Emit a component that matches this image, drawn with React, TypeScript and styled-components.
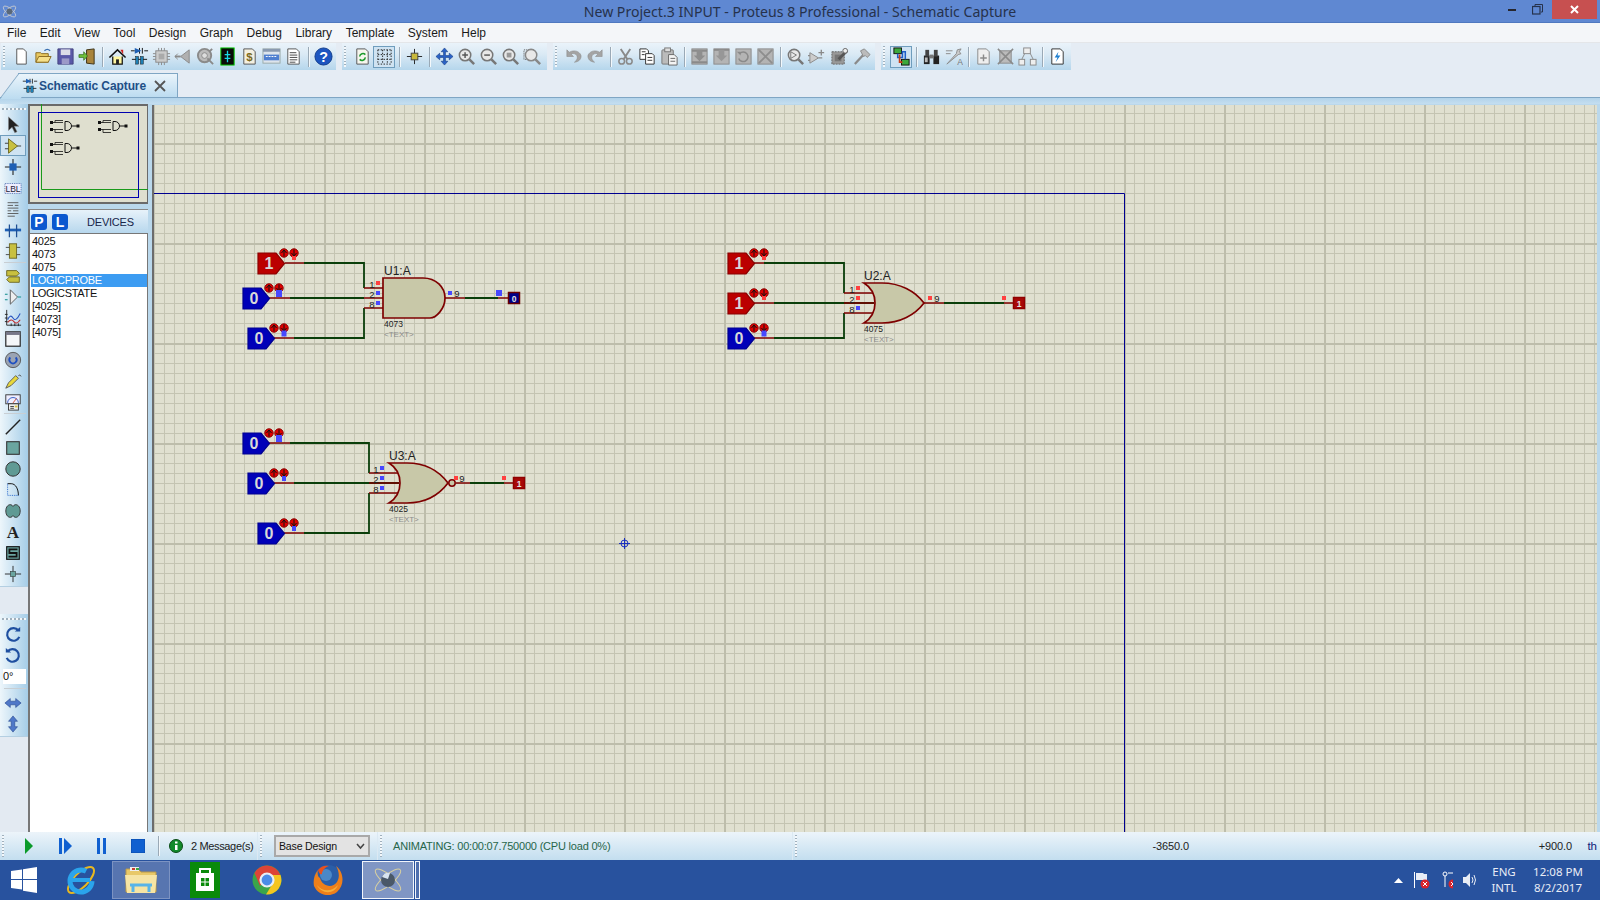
import React, { ReactNode } from 'react';
import styled, { createGlobalStyle } from 'styled-components';

const Global = createGlobalStyle`
  html, body { margin: 0; padding: 0; width: 1600px; height: 900px; overflow: hidden; background: #e3eaf2; }
  * { box-sizing: border-box; }
  body { font-family: "Liberation Sans", Arial, sans-serif; }
`;

const Page = styled.div`width:1600px;height:900px;display:flex;flex-direction:column;overflow:hidden;`;
const TitleBar = styled.div`height:23px;background:#5f88d2;border-bottom:1px solid #4f78c0;display:flex;align-items:flex-start;position:relative;`;
const AppIcon = styled.div`width:24px;height:22px;padding:3px 0 0 1px;`;
const TitleText = styled.div`position:absolute;left:0;right:0;top:1px;text-align:center;font:14.1px/21px "Noto Sans",sans-serif;color:#26324c;`;
const WinButtons = styled.div`margin-left:auto;display:flex;padding-right:3px;position:relative;`;
const WinBtn = styled.div<{ $w: number; $close?: boolean }>`width:${p => p.$w}px;height:19px;display:flex;align-items:center;justify-content:center;background:${p => (p.$close ? '#c75050' : 'transparent')};`;

const MenuBar = styled.div`height:20px;background:#f4f6f9;border-bottom:1px solid #e4e6e9;display:flex;align-items:center;gap:13.5px;padding:1px 0 0 7px;`;
const MenuItem = styled.span`font-size:12px;color:#1a1a1a;`;

const ToolArea = styled.div`height:54px;background:#e5ecf4;`;
const ToolRow = styled.div`height:30px;padding-left:1px;display:flex;gap:6px;align-items:flex-start;`;
const Group = styled.div<{ $end?: number }>`height:27px;display:flex;align-items:center;padding:0 ${p => p.$end ?? 2}px 0 9px;background:linear-gradient(#eaf3fa,#dbeaf5 40%,#b5d6ec);position:relative;`;
const Gripper = styled.i`position:absolute;left:2px;top:3px;bottom:3px;width:2px;background:repeating-linear-gradient(#9fb0bd 0 1px,#f4f8fb 1px 3px);`;
const VGripper = styled.i`display:block;height:2px;margin:4px 2px;background:repeating-linear-gradient(90deg,#9fb0bd 0 2px,#f4f8fb 2px 4px);`;
const ToolBtn = styled.div<{ $on?: boolean }>`width:22px;height:22px;display:flex;align-items:center;justify-content:center;${p => p.$on ? 'background:#cfe3f2;border:1px solid #6f9dbd;' : ''}`;
const Sep = styled.i`width:8px;height:20px;display:flex;justify-content:center;&::after{content:'';width:1px;background:#9aa9b6;box-shadow:1px 0 0 #f3f8fb;}`;
const TabRow = styled.div`height:24px;padding-left:18px;`;
const Tab = styled.div`width:160px;height:24px;position:relative;border:1px solid #7fa6c4;border-left:none;border-bottom:none;background:linear-gradient(#eaf4fb,#bcdcf0);display:flex;align-items:center;padding-left:4px;
  &::before{content:'';position:absolute;left:-9px;top:-1px;width:20px;height:25px;background:linear-gradient(#eaf4fb,#bcdcf0);border-left:1px solid #7fa6c4;border-top:1px solid #7fa6c4;transform:skewX(-37deg);}
`;
const TabIcon = styled.span`position:relative;display:flex;width:17px;`;
const TabLabel = styled.span`position:relative;font-size:12px;font-weight:bold;color:#1f4f86;margin-left:0;letter-spacing:-.1px;`;
const TabClose = styled.span`display:flex;margin-left:8px;`;

const Band = styled.div`height:7px;background:linear-gradient(#b2d3ea,#c4def0);border-top:1px solid #7fa6c4;`;
const Main = styled.div`height:728px;display:flex;background:#bad8ec;`;

const Strip = styled.div`width:28px;display:flex;flex-direction:column;background:#e3eaf2;`;
const StripGroup = styled.div<{ $mt?: number }>`margin-top:${p => p.$mt ?? 0}px;padding-bottom:2px;background:linear-gradient(90deg,#edf6fb,#a5cde8);border-bottom:1px solid #b4cfe2;`;
const SideBtn = styled.div<{ $on?: boolean }>`width:26px;height:21px;margin-left:0;display:flex;align-items:center;justify-content:center;${p => p.$on ? 'background:#cfe3f2;outline:1px solid #6f9dbd;outline-offset:-1px;' : ''}`;
const SideSep = styled.i<{ $mt?: number; $mb?: number }>`display:block;height:1px;margin:${p => p.$mt ?? 1}px 2px ${p => p.$mb ?? 2}px 4px;background:#c8ced3;`;
const AngleBox = styled.div`width:23px;height:15px;margin:3px 0 2px 3px;background:#fff;font-size:11px;line-height:14px;color:#111;`;

const Side = styled.div`width:122px;display:flex;flex-direction:column;`;
const Overview = styled.div`width:120px;height:100px;background:#dfdfcf;border:2px solid #6a6a6a;border-right-width:1px;position:relative;`;
const OverSvg = styled.svg`position:absolute;left:-2px;top:-2px;`;
const DevHead = styled.div`margin-top:5px;width:120px;height:24px;display:flex;align-items:center;padding-left:1px;gap:5px;background:linear-gradient(#e7f2fa,#b7d7ed);border:1px solid #8aa;border-width:1px 0 0 2px;border-left-color:#777;border-top-color:#888;`;
const PL = styled.div`width:16px;height:16px;border-radius:3px;background:#0b58cf;color:#fff;font-size:14px;font-weight:bold;line-height:16px;text-align:center;`;
const DevTitle = styled.div`font-size:11px;letter-spacing:-.2px;color:#18264a;margin-left:14px;`;
const DevList = styled.div`width:120px;flex:1;background:#fff;border:solid #777;border-width:1px 1px 0 2px;padding:1px 0 0 1px;`;
const DevRow = styled.div<{ $sel?: boolean }>`height:13px;font-size:11px;letter-spacing:-.3px;line-height:13px;padding-left:1px;color:${p => (p.$sel ? '#fff' : '#111')};background:${p => (p.$sel ? '#3c9cf2' : 'transparent')};`;

const CanvasFrame = styled.div`flex:1;margin:1px 3px 0 2px;border-left:2px solid #6c6c6c;position:relative;background-color:#e0e0d0;
  background-image:
    linear-gradient(90deg,#bdbdab 2px,transparent 2px),
    linear-gradient(#bdbdab 2px,transparent 2px),
    linear-gradient(90deg,#c4c4b2 1px,transparent 1px),
    linear-gradient(#c4c4b2 1px,transparent 1px);
  background-size:100px 100%,100% 100px,10px 100%,100% 10px;
  background-position:70px 0,0 38px,0 0,0 8px;
`;
const Sheet = styled.svg`position:absolute;left:0;top:0;`;

const StatusBar = styled.div`height:28px;display:flex;align-items:center;background:linear-gradient(#ecf4fa,#c3deef);font-size:11px;color:#111;`;
const StatusCell = styled.div<{ $w: number; $pl?: number; $last?: boolean }>`width:${p => p.$w}px;height:100%;flex:none;display:flex;align-items:center;padding-left:${p => p.$pl ?? 0}px;position:relative;border-right:${p => (p.$last ? 'none' : '1px solid #dbe9f3')};`;
const StatusBtn = styled.div<{ $w: number; $pl?: number }>`width:${p => p.$w}px;padding-left:${p => p.$pl ?? 0}px;display:flex;justify-content:center;`;
const Msg = styled.span`color:#1b1b1b;font-size:11px;letter-spacing:-.35px;`;
const SelectBox = styled.div`width:96px;height:22px;background:#e3e3e3;border:2px solid #a9a9a9;display:flex;align-items:center;justify-content:space-between;padding:0 3px 0 3px;font-size:10.6px;letter-spacing:-.2px;color:#111;`;
const Anim = styled.span`color:#27664a;font-size:11px;letter-spacing:-.2px;`;
const Coord = styled.span<{ $w: number }>`width:${p => p.$w}px;flex:none;text-align:right;color:#222;font-size:11px;letter-spacing:-.1px;`;
const Units = styled.span`margin-left:auto;margin-right:3px;color:#101a78;font-size:11.5px;`;

const Taskbar = styled.div`height:40px;background:#28529e;display:flex;align-items:stretch;gap:4px;color:#fff;`;
const TaskSlot = styled.div<{ $w: number; $state?: 'open' | 'active' }>`width:${p => p.$w}px;flex:none;margin:1px 0;display:flex;align-items:center;justify-content:center;
  ${p => p.$state === 'open' ? 'background:#5775b0;outline:1px solid #7c93c2;outline-offset:-1px;' : ''}
  ${p => p.$state === 'active' ? 'background:#8096c4;border:1px solid #f2f5fb;' : ''}`;
const Sliver = styled.div`width:5px;margin:1px 0 1px -3px;border:1px solid #f2f5fb;background:#4f6fae;`;
const Tray = styled.div`margin-left:auto;display:flex;align-items:center;padding-right:17px;`;
const TrayIcon = styled.div<{ $w: number }>`width:${p => p.$w}px;display:flex;justify-content:center;`;
const TrayText = styled.div<{ $w: number; $ml?: number }>`width:${p => p.$w}px;margin-left:${p => p.$ml ?? 0}px;text-align:center;white-space:nowrap;font:11.5px/16px "Noto Sans",sans-serif;color:#e8edf6;`;

const Glyph: React.FC<{ children: ReactNode; s?: number }> = ({ children, s = 20 }) => (
  <svg width={s} height={s} viewBox="0 0 20 20" style={{ display: 'block' }}>{children}</svg>
);
const G = '#a4a4a4';
const GD = '#8a8a8a';
const Mag = ({ c = '#777', inner }: { c?: string; inner?: ReactNode }) => (
  <><circle cx="8.5" cy="8.5" r="6" fill="#e8e8e8" stroke={c} strokeWidth="1.6" />{inner}<path d="M13 13l5 5" stroke={c} strokeWidth="2.6" /></>
);
const Block = ({ children }: { children: ReactNode }) => (
  <><rect x="2" y="2" width="16" height="16" fill="#b4b4b4" stroke={GD} />{children}</>
);

const tb: Record<string, ReactNode> = {
  new: <path d="M5 2h7l3 3v13H5z" fill="#fff" stroke="#555" />,
  open: <><path d="M2 16V6h5l1 1h7v9z" fill="#e8c860" stroke="#8a6a20" /><path d="M2 16l3-6h13l-3 6z" fill="#f6e08a" stroke="#8a6a20" /><path d="M11 4q3-3 6 0" fill="none" stroke="#3a6fb0" strokeWidth="1.4" /></>,
  save: <><path d="M2 2h16v16H2z" fill="#5a58a8" stroke="#45437f" /><rect x="5" y="2.5" width="10" height="6" fill="#dcdce8" /><rect x="6" y="12" width="8" height="6" fill="#9c9ac8" /></>,
  imp: <><path d="M9 3l8-1v16l-8-1z" fill="#a8843c" stroke="#3c3014" /><path d="M1 8h5V5l4 4.5L6 14v-3H1z" fill="#6fc03c" stroke="#2d6a15" strokeWidth=".7" /></>,
  home: <><path d="M5 10v8h10v-8" fill="#fff6a0" stroke="#111" strokeWidth="1.3" /><path d="M1.5 11L10 3l8.500 8" fill="none" stroke="#111" strokeWidth="1.6" /><path d="M13 3h3v5z" fill="#d02020" /><rect x="8.500" y="13" width="3" height="5" fill="#222" /></>,
  comp: <><path d="M10 1v6M1 4h4M15 4h4" stroke="#111" /><path d="M5 1v6l7-3z" fill="#1e5fb4" /><path d="M13 1v6" stroke="#111" /><path d="M2 13h16" stroke="#111" /><rect x="6" y="10" width="3" height="8" fill="#1e7fb4" stroke="#111" strokeWidth=".5" /><rect x="11" y="10" width="3" height="8" fill="#1e7fb4" stroke="#111" strokeWidth=".5" /></>,
  chip: <><rect x="4" y="4" width="12" height="12" fill="#ccc" stroke={GD} /><rect x="7" y="7" width="6" height="6" fill="#aaa" /><path d="M1 7h3M1 10h3M1 13h3M16 7h3M16 10h3M16 13h3M7 1v3M10 1v3M13 1v3M7 16v3M10 16v3M13 16v3" stroke={GD} /></>,
  gate: <><path d="M16 3v14L7 10z" fill="#b0b0b0" stroke={GD} /><path d="M1 10h6" stroke={GD} strokeWidth="2" /><path d="M4 7L1 10l3 3" fill="none" stroke={GD} /></>,
  wheel: <><circle cx="9" cy="9" r="7" fill="#bbb" stroke={GD} strokeWidth="2" /><circle cx="9" cy="9" r="3" fill="#ddd" stroke={GD} /><path d="M12 12l6 6M17 2l-3 3" stroke={GD} strokeWidth="2" /></>,
  board: <><rect x="3" y="1" width="14" height="18" fill="#0a0a0a" stroke="#0c0" /><path d="M10 4v12M7 8h6M7 12h6" stroke="#18d8e8" strokeWidth="1.4" /></>,
  bom: <><path d="M4 2h9l3 3v13H4z" fill="#f4f0e0" stroke="#555" /><text x="10" y="15" fontSize="12" fontWeight="bold" textAnchor="middle" fill="#7a6a20" fontFamily="Liberation Sans">$</text></>,
  disp: <><rect x="1" y="2" width="18" height="15" fill="#dde4ec" stroke="#9aa" /><rect x="1" y="2" width="18" height="3" fill="#8a9ab0" /><rect x="2" y="8" width="16" height="6" fill="#4f7fd0" /><path d="M4 10h12" stroke="#fff" strokeDasharray="2 1" /></>,
  doc: <><path d="M4 2h9l3 3v13H4z" fill="#fff" stroke="#555" /><path d="M6 6h7M6 8.500h8M6 11h8M6 13.500h8M6 16h6" stroke="#444" /></>,
  help: <><circle cx="10" cy="10" r="9" fill="#1c55c0" stroke="#0e3a8a" /><text x="10" y="15.500" fontSize="15" fontWeight="bold" textAnchor="middle" fill="#fff" fontFamily="Liberation Sans">?</text></>,
  refresh: <><path d="M4 2h9l3 3v13H4z" fill="#f6f6ee" stroke="#555" /><path d="M7 10a3.500 3.500 0 0 1 6-2M13 11a3.500 3.500 0 0 1-6 2" fill="none" stroke="#1c9a2c" strokeWidth="1.6" /></>,
  grid: <path d="M3 3h14M3 8h14M3 13h14M3 18h14M3 3v15M8 3v15M13 3v15M17 3v15" stroke="#222" strokeDasharray="1.500 1.500" fill="none" />,
  origin: <><path d="M10 2v16M2 10h16" stroke="#222" /><rect x="6.500" y="6.500" width="7" height="7" fill="#c8b83c" stroke="#444" /></>,
  pan: <path d="M10 1l3.500 4H11v4h4V6.500l4 3.500-4 3.500V11h-4v4h2.500L10 19l-3.500-4H9v-4H5v2.500L1 10l4-3.500V9h4V5H6.500z" fill="#2a62c8" stroke="#143a80" strokeWidth=".6" />,
  zin: <Mag inner={<path d="M5.500 8.500h6M8.500 5.500v6" stroke="#555" strokeWidth="1.5" />} />,
  zout: <Mag inner={<path d="M5.500 8.500h6" stroke="#555" strokeWidth="1.5" />} />,
  zall: <Mag inner={<rect x="6" y="6" width="5" height="5" fill="#999" />} />,
  zarea: <><path d="M1 3h10v10H1z" fill="none" stroke="#555" strokeDasharray="1 1" /><Mag c="#888" /></>,
  undo: <path d="M3 3v7h7L7.500 7.500C10 6 14 7.500 14 11c0 2-1 3.500-3 5 4.500-.5 7-3 7-6.500C18 7 13 1.500 5.500 5.500z" fill={G} stroke={GD} strokeWidth=".6" />,
  redo: <path d="M17 3v7h-7l2.500-2.500C10 6 6 7.500 6 11c0 2 1 3.500 3 5-4.500-.5-7-3-7-6.500C2 7 7 1.500 14.500 5.500z" fill={G} stroke={GD} strokeWidth=".6" />,
  cut: <><path d="M5 2l7 11M15 2L8 13" stroke={GD} strokeWidth="2" /><circle cx="6" cy="15" r="3" fill="none" stroke={GD} strokeWidth="1.6" /><circle cx="14" cy="15" r="3" fill="none" stroke={GD} strokeWidth="1.6" /></>,
  copy: <><path d="M2 2h7l2 2v9H2z" fill="#fff" stroke="#333" /><path d="M8 7h7l2 2v9H8z" fill="#fff" stroke="#333" /><path d="M4 5h4M4 8h3M10 11h5M10 14h5" stroke="#333" /></>,
  paste: <><rect x="2" y="3" width="12" height="15" rx="1" fill="#bbb" stroke="#777" /><rect x="5" y="1" width="6" height="4" fill="#ddd" stroke="#777" /><path d="M9 8h6l3 3v8H9z" fill="#f4f4f4" stroke="#666" /><path d="M11 12h5M11 15h5" stroke="#666" /></>,
  bcopy: <Block><path d="M2 4h16M2 16h16" stroke={GD} strokeWidth="2" /><path d="M7 3h6v6h3l-6 6-6-6h3z" fill="#8e8e8e" /></Block>,
  bmove: <Block><path d="M2 3h16" stroke={GD} strokeWidth="2" /><path d="M7 3h6v6h3l-6 6-6-6h3z" fill="#979797" /></Block>,
  brot: <Block><path d="M6 7a5 5 0 1 1-1 5" fill="none" stroke={GD} strokeWidth="1.6" /><path d="M3 5l4 0v4z" fill={GD} /></Block>,
  bdel: <Block><path d="M3 3l14 14M17 3L3 17" stroke="#8e8e8e" strokeWidth="2" /></Block>,
  pick: <Mag inner={<path d="M5 5l6 3.500L5 12z" fill="none" stroke="#777" />} />,
  make: <><path d="M2 6v11l9-5.500z" fill="#ccc" stroke={GD} /><path d="M11 11.500h4M14 3v6M11 6h6M0 9h2M0 14h2" stroke={GD} strokeWidth="1.4" /></>,
  pkg: <><rect x="2" y="5" width="13" height="13" fill="#999" stroke="#666" strokeDasharray="2 1" /><rect x="5" y="8" width="7" height="7" fill="#777" /><path d="M9 13l9-9" stroke="#555" strokeWidth="3" /><circle cx="16" cy="4" r="2.500" fill="#eee" stroke="#666" /></>,
  ham: <><path d="M3 18L13 7" stroke={GD} strokeWidth="2.400" /><path d="M9 4l4-2 6 6-3 3-2-2-2 1z" fill="#bbb" stroke={GD} /></>,
  route: <><rect x="2" y="1" width="8" height="6" fill="#3ca83c" stroke="#111" /><rect x="10" y="13" width="8" height="6" fill="#3ca83c" stroke="#111" /><path d="M6 7v4h5V5h3v8" fill="none" stroke="#1e5fc8" strokeWidth="1.6" /><path d="M8 8v8h3" fill="none" stroke="#c83c14" strokeWidth="1.8" /></>,
  bino: <><rect x="2" y="9" width="6" height="9" fill="#222" /><rect x="12" y="9" width="6" height="9" fill="#222" /><rect x="3.500" y="3" width="4" height="7" fill="#444" /><rect x="12.500" y="3" width="4" height="7" fill="#444" /><rect x="8" y="8" width="4" height="4" fill="#777" /><rect x="3" y="11" width="3" height="5" fill="#bbb" /></>,
  assign: <><path d="M2 4h7M2 7h5" stroke={GD} /><path d="M3 18L13 7l1-4 4-1-2 3 2 2-3 1z" fill="#ccc" stroke={GD} /><text x="14" y="19" fontSize="9" fill="#777" fontFamily="Liberation Sans">A</text></>,
  sheet: <><path d="M4 2h9l3 3v13H4z" fill="#eee" stroke={GD} /><path d="M10 8v7M6.500 11.500h7" stroke={GD} strokeWidth="1.5" /></>,
  rmsheet: <><rect x="4" y="4" width="12" height="13" fill="#bbb" stroke={GD} /><path d="M2 2l16 16M18 2L2 18" stroke={GD} strokeWidth="1.6" /></>,
  goto: <><rect x="6" y="1" width="7" height="6" fill="#eee" stroke={GD} /><rect x="1" y="13" width="6" height="6" fill="#eee" stroke={GD} /><rect x="13" y="13" width="6" height="6" fill="#eee" stroke={GD} /><path d="M7 7l-3 6M13 7l3 6" stroke={GD} /></>,
  net: <><path d="M4 2h9l3 3v13H4z" fill="#fff" stroke="#333" /><path d="M11 5L7 11h3l-2 5 5-7h-3z" fill="#1e7fd0" /></>,
};
const Teal = '#6aa5a0';
const sd: Record<string, ReactNode> = {
  select: <path d="M5 1v15l4-3.500 3 6 2.500-1-3-6h5z" fill="#222" stroke="#888" strokeWidth=".6" />,
  comp: <><path d="M1 7h5M1 13h5M14 10h5" stroke="#444" strokeWidth="1.2" /><path d="M5 2v16l10-8z" fill="#c8c040" stroke="#6a6420" /></>,
  junc: <><path d="M10 1v18M1 10h18" stroke="#222" strokeWidth="1.2" /><rect x="6" y="6" width="8" height="8" fill="#1e5fb4" /></>,
  lbl: <><rect x="1" y="5" width="18" height="11" fill="#eef" stroke="#46a" strokeDasharray="1 1" /><text x="10" y="14" fontSize="9.500" textAnchor="middle" fill="#223" fontFamily="Liberation Sans">LBL</text></>,
  script: <path d="M4 3h12M4 6h6M12 6h4M4 9h12M4 12h4M10 12h6M4 15h12M4 18h8" stroke="#555" />,
  bus: <><path d="M1 10h18" stroke="#1e5fb4" strokeWidth="3" /><path d="M6 4v14M14 4v14" stroke="#1e4f94" strokeWidth="1.4" /></>,
  sub: <><rect x="6" y="2" width="8" height="16" fill="#c8c040" stroke="#6a6420" /><path d="M2 6h4M2 14h4M14 6h4M14 14h4" stroke="#444" /></>,
  term: <><path d="M3 4h11l3 3-3 3H3z" fill="#c8c040" stroke="#6a6420" /><path d="M17 11H6l-3 3 3 3h11z" fill="#c8c040" stroke="#6a6420" /></>,
  pin: <><path d="M7 2v16l8-8z" fill="#eee" stroke="#555" /><path d="M1 7h3" stroke="#2a9a9a" strokeWidth="1.3" /><path d="M1 13h3" stroke="#2a9a9a" strokeWidth="1.3" /><path d="M15 10h4" stroke="#2a9a9a" strokeWidth="1.3" /></>,
  graph: <><path d="M3 1v17h16" fill="none" stroke="#222" /><path d="M4 12q3-7 6-2t8-5" fill="none" stroke="#2a55c0" strokeWidth="1.2" /><path d="M4 15q4-5 7-1t7-2" fill="none" stroke="#c02a2a" strokeWidth="1.2" /><path d="M1 6h3M1 10h3M1 14h3M8 16v3M12 16v3M16 16v3" stroke="#222" /></>,
  tape: <><rect x="2" y="2" width="16" height="16" fill="#f4f6f8" stroke="#222" strokeWidth="1.3" /><rect x="2" y="2" width="16" height="3.500" fill="#778" /></>,
  gen: <><circle cx="10" cy="10" r="8.500" fill="#9aa4b4" stroke="#555" /><path d="M7 7a4 4 0 1 0 6 0" fill="none" stroke="#1e4fc0" strokeWidth="2" /></>,
  pencil: <><path d="M2 18l3-6 8-8 3 3-8 8z" fill="#e8d83c" stroke="#555" /><path d="M16 4q2-2 3 1" fill="none" stroke="#555" /></>,
  inst: <><rect x="2" y="2" width="16" height="10" fill="#eef" stroke="#333" /><path d="M4 11a6 6 0 0 1 12 0" fill="none" stroke="#2a55c0" /><path d="M10 11l4-5" stroke="#d04020" /><rect x="5" y="12" width="11" height="7" fill="#eee" stroke="#333" /><path d="M7 15h4M7 17h4" stroke="#333" /><rect x="12" y="14" width="3" height="2" fill="#d8c040" /></>,
  line: <path d="M2 18L18 2" stroke="#222" strokeWidth="1.6" />,
  box: <rect x="3" y="3" width="14" height="14" fill={Teal} stroke="#333" strokeWidth="1.2" />,
  circle: <circle cx="10" cy="10" r="8" fill="#5f9a94" stroke="#333" strokeWidth="1.1" />,
  arc: <><path d="M4 3h4c5 0 8 6 8 13" fill="none" stroke="#111" strokeWidth="1.1" /><path d="M4 3v13h12" fill="none" stroke="#1e5fc8" strokeDasharray="1 1" /></>,
  path: <path d="M2 10c0-7 6-9 8-5 2-4 8-2 8 5s-6 9-8 5c-2 4-8 2-8-5z" fill="#5f9a94" stroke="#333" />,
  A: <text x="10" y="16.500" fontSize="19" fontWeight="bold" textAnchor="middle" fill="#222" fontFamily="Liberation Serif">A</text>,
  sym: <><rect x="3" y="3" width="14" height="14" fill={Teal} stroke="#111" strokeWidth="1.3" /><path d="M15 6H6v4h8v4H5" fill="none" stroke="#111" strokeWidth="2" /></>,
  mark: <><path d="M10 1v18M1 10h18" stroke="#222" /><rect x="7" y="7" width="6" height="6" fill={Teal} stroke="#333" strokeWidth=".6" /></>,
  cw: <><path d="M16 5a7 7 0 1 0 1 7" fill="none" stroke="#1f4fa0" strokeWidth="2.400" /><path d="M12 6h6V1z" fill="#1f4fa0" /></>,
  ccw: <><path d="M4 5a7 7 0 1 1-1 7" fill="none" stroke="#1f4fa0" strokeWidth="2.400" /><path d="M8 6H2V1z" fill="#1f4fa0" /></>,
  fh: <path d="M1 10l6-5v3h6V5l6 5-6 5v-3H7v3z" fill="#4f78c8" stroke="#1f3f88" strokeWidth=".6" />,
  fv: <path d="M10 1l5 6h-3v6h3l-5 6-5-6h3V7H5z" fill="#4f78c8" stroke="#1f3f88" strokeWidth=".6" />,
};

const groups: { end?: number; items: (string | null)[] }[] = [
  { items: ['new', 'open', 'save', 'imp', null, 'home', 'comp', 'chip', 'gate', 'wheel', 'board', 'bom', 'disp', 'doc', null, 'help'] },
  { end: 4, items: ['refresh', 'grid', null, 'origin', null, 'pan', 'zin', 'zout', 'zall', 'zarea'] },
  { end: 3, items: ['undo', 'redo', null, 'cut', 'copy', 'paste', null, 'bcopy', 'bmove', 'brot', 'bdel', null, 'pick', 'make', 'pkg', 'ham'] },
  { end: 3, items: ['route', null, 'bino', 'assign', null, 'sheet', 'rmsheet', 'goto', null, 'net'] },
];
const menus = ['File', 'Edit', 'View', 'Tool', 'Design', 'Graph', 'Debug', 'Library', 'Template', 'System', 'Help'];
const devices = ['4025', '4073', '4075', 'LOGICPROBE', 'LOGICSTATE', '[4025]', '[4073]', '[4075]'];
const RED = '#7e0000';
const WIRE = '#0a3f0a';
const HI = '#ff4040';
const LO = '#4848ff';

const Updown = ({ x, y }: { x: number; y: number }) => (
  <>
    <circle cx={x} cy={y} r="4.200" fill="#e00000" stroke="#8c0000" />
    <path d={`M${x} ${y + 3.500}v-6.500m-2.500 3l2.500-3 2.500 3`} stroke="#111" fill="none" strokeWidth="1" />
    <circle cx={x + 10} cy={y} r="4.200" fill="#e00000" stroke="#8c0000" />
    <path d={`M${x + 10} ${y - 3.500}v6.500m-2.500-3l2.500 3 2.500-3`} stroke="#111" fill="none" strokeWidth="1" />
  </>
);
const Source = ({ x, y, v, sq = 4 }: { x: number; y: number; v: 0 | 1; sq?: number }) => {
  const on = v === 1;
  return (
    <>
      <polygon points={`${x},${y} ${x + 18},${y} ${x + 26.500},${y + 10.500} ${x + 18},${y + 21} ${x},${y + 21}`} fill={on ? '#bb0000' : '#0000b8'} stroke={on ? '#8a0000' : '#000090'} strokeWidth="1.200" />
      <text x={x + 11} y={y + 16} fontSize="16" fontWeight="bold" textAnchor="middle" fill="#d8d8d8" fontFamily="Liberation Sans">{v}</text>
      <Updown x={x + 26} y={y} />
      <rect x={x + 36 - sq / 2} y={y + 5 - sq / 2} width={sq} height={sq + (on ? 0 : 1)} fill={on ? HI : LO} />
    </>
  );
};
const Pw = ({ d }: { d: string }) => <path d={d} stroke={RED} strokeWidth="1.700" fill="none" />;
const Gw = ({ d }: { d: string }) => <path d={d} stroke={WIRE} strokeWidth="1.800" fill="none" />;
const Sq = ({ x, y, on, s = 4 }: { x: number; y: number; on: boolean; s?: number }) => (
  <rect x={x - s / 2} y={y - s / 2} width={s} height={s} fill={on ? HI : LO} />
);
const Lbl = styled.text`font-family:"Liberation Sans",sans-serif;fill:#222;`;
const Probe = ({ x, y, v }: { x: number; y: number; v: 0 | 1 }) => (
  <>
    <rect x={x + .5} y={y + .5} width="11" height="11" fill={v ? '#a80808' : '#000088'} stroke={v ? '#900000' : '#6a0000'} strokeWidth="1.500" />
    <text x={x + 6} y={y + 9.500} fontSize="8.500" fontWeight="bold" textAnchor="middle" fill="#e4e4e4" fontFamily="Liberation Sans">{v}</text>
  </>
);
const GateTexts = ({ x, y, name, type, pinX }: { x: number; y: number; name: string; type: string; pinX: number }) => (
  <>
    <Lbl x={x} y={y - 20} fontSize="12">{name}</Lbl>
    <Lbl x={x} y={y + 32} fontSize="8.500">{type}</Lbl>
    <Lbl x={x} y={y + 42} fontSize="8" style={{ fill: '#8c8c8c' }}>{'<TEXT>'}</Lbl>
    <Lbl x={pinX} y={y - 7} fontSize="9.500" textAnchor="middle">1</Lbl>
    <Lbl x={pinX} y={y + 3} fontSize="9.500" textAnchor="middle">2</Lbl>
    <Lbl x={pinX} y={y + 13} fontSize="9.500" textAnchor="middle">8</Lbl>
  </>
);
const orPath = (x: number, y: number, w: number) =>
  `M${x} ${y - 20}H${x + 18}C${x + 36} ${y - 20} ${x + w - 9} ${y - 12} ${x + w} ${y}C${x + w - 9} ${y + 12} ${x + 36} ${y + 20} ${x + 18} ${y + 20}H${x}C${x + 8} ${y + 15} ${x + 11} ${y + 8} ${x + 11} ${y}C${x + 11} ${y - 8} ${x + 8} ${y - 15} ${x} ${y - 20}Z`;
const BODY = '#c8c8a8';

const MiniGate = ({ x, y }: { x: number; y: number }) => (
  <g stroke="#111" fill="none" strokeWidth="1">
    <rect x={x + .5} y={y - 3.500} width="2" height="2" fill="#111" />
    <rect x={x + .5} y={y + 3.500} width="2" height="2" fill="#111" />
    <path d={`M${x + 3} ${y - 2.500}h10M${x + 3} ${y + 4.500}h10M${x + 5} ${y - 2.500}v-2h8M${x + 5} ${y + 4.500}v3h8`} strokeWidth=".8" />
    <path d={`M${x + 15} ${y - 3.500}h2a4.500 4.500 0 0 1 0 9h-2z`} />
    <path d={`M${x + 22} ${y + 1}h6`} />
    <rect x={x + 27} y={y} width="2" height="2" fill="#111" />
  </g>
);

export default function App() {
  return (
    <Page>
      <Global />
      <TitleBar>
        <AppIcon>
          <Glyph s={17}>
            <ellipse cx="10" cy="10" rx="9" ry="3.500" fill="none" stroke="#c9ccd0" transform="rotate(40 10 10)" />
            <ellipse cx="10" cy="10" rx="9" ry="3.500" fill="none" stroke="#c9ccd0" transform="rotate(-40 10 10)" />
            <circle cx="10" cy="10" r="3.500" fill="#5a6878" />
          </Glyph>
        </AppIcon>
        <TitleText>New Project.3 INPUT - Proteus 8 Professional - Schematic Capture</TitleText>
        <WinButtons>
          <WinBtn $w={20}><svg width="8" height="2"><rect width="8" height="2" fill="#26262e" /></svg></WinBtn>
          <WinBtn $w={30}><svg width="11" height="11"><path d="M3 2V.5h7.500V8H9" fill="none" stroke="#26324c" /><rect x=".5" y="2.500" width="7.500" height="7.500" fill="none" stroke="#26324c" strokeWidth="1.200" /></svg></WinBtn>
          <WinBtn $w={45} $close><svg width="9" height="9"><path d="M1 1l7 7M8 1L1 8" stroke="#fff" strokeWidth="2" /></svg></WinBtn>
        </WinButtons>
      </TitleBar>

      <MenuBar>{menus.map(m => <MenuItem key={m}>{m}</MenuItem>)}</MenuBar>

      <ToolArea>
        <ToolRow>
          {groups.map((g, i) => (
            <Group key={i} $end={g.end}>
              <Gripper />
              {g.items.map((it, j) => it === null ? <Sep key={j} /> : (
                <ToolBtn key={j} $on={it === 'grid' || it === 'route'}><Glyph s={19}>{tb[it]}</Glyph></ToolBtn>
              ))}
            </Group>
          ))}
        </ToolRow>
        <TabRow>
          <Tab>
            <TabIcon><Glyph s={16}>{tb.comp}</Glyph></TabIcon>
            <TabLabel>Schematic Capture</TabLabel>
            <TabClose><svg width="12" height="12"><path d="M1 1l10 10M11 1L1 11" stroke="#555" strokeWidth="1.800" /></svg></TabClose>
          </Tab>
        </TabRow>
      </ToolArea>
      <Band />

      <Main>
        <Strip>
          <StripGroup>
            <VGripper />
            {['select', 'comp', 'junc', 'lbl', 'script', 'bus', 'sub', null, 'term', 'pin', 'graph', 'tape', 'gen', 'pencil', 'inst', null, 'line', 'box', 'circle', 'arc', 'path', 'A', 'sym', 'mark'].map((n, i) =>
              n === null ? <SideSep key={i} /> : <SideBtn key={i} $on={n === 'comp'}><Glyph s={18}>{sd[n]}</Glyph></SideBtn>
            )}
          </StripGroup>
          <StripGroup $mt={27}>
            <VGripper />
            <SideBtn><Glyph s={18}>{sd.cw}</Glyph></SideBtn>
            <SideBtn><Glyph s={18}>{sd.ccw}</Glyph></SideBtn>
            <AngleBox>0°</AngleBox>
            <SideSep $mt={4} $mb={3} />
            <SideBtn><Glyph s={18}>{sd.fh}</Glyph></SideBtn>
            <SideBtn><Glyph s={18}>{sd.fv}</Glyph></SideBtn>
          </StripGroup>
        </Strip>

        <Side>
          <Overview>
            <OverSvg width="120" height="100">
              <path d="M13.500 0V85.500H120" fill="none" stroke="#1a9a1a" strokeWidth="1" />
              <rect x="10.500" y="8.500" width="100" height="85" fill="none" stroke="#0000b0" />
              <MiniGate x={22} y={21} />
              <MiniGate x={70} y={21} />
              <MiniGate x={22} y={43} />
            </OverSvg>
          </Overview>
          <DevHead>
            <PL>P</PL><PL>L</PL><DevTitle>DEVICES</DevTitle>
          </DevHead>
          <DevList>
            {devices.map(d => <DevRow key={d} $sel={d === 'LOGICPROBE'}>{d}</DevRow>)}
          </DevList>
        </Side>

        <CanvasFrame>
          <Sheet width="1441" height="727" viewBox="154 105 1441 727">
            <path d="M154 193.500H1124.500V832" fill="none" stroke="#000090" />

            {/* U1 */}
            <Gw d="M304 263H364V288M290 298H364M294 338H364V308" />
            <Pw d="M285 263H304M269 298H290M274 338H294M364 288H383M364 298H383M364 308H383M445 298H465M498 298H508" />
            <Gw d="M465 298H498" />
            <path d="M383 278H423C436 278 445 287 445 298C445 309 436 318 430 318H383Z" fill={BODY} stroke={RED} strokeWidth="1.700" />
            <Source x={258} y={253} v={1} />
            <Source x={243} y={288} v={0} sq={6} />
            <Source x={248} y={328} v={0} sq={5} />
            <Sq x={378} y={283} on /><Sq x={378} y={293} on={false} /><Sq x={378} y={303} on={false} />
            <Sq x={450} y={293} on={false} /><Sq x={499} y={293} on={false} s={6} />
            <Lbl x={457} y={297} fontSize="9.500" textAnchor="middle">9</Lbl>
            <Probe x={508} y={292} v={0} />
            <GateTexts x={384} y={295} name="U1:A" type="4073" pinX={372} />

            {/* U2 */}
            <Gw d="M764 263H844V293M774 303H874M774 338H844V313" />
            <Pw d="M754 263H764M754 303H774M754 338H774M844 293H874M844 303H874M844 313H874M924 303H944M1004 303H1014" />
            <Gw d="M944 303H1004" />
            <path d={orPath(864, 303, 60)} fill={BODY} stroke={RED} strokeWidth="1.700" />
            <Source x={728} y={253} v={1} />
            <Source x={728} y={293} v={1} />
            <Source x={728} y={328} v={0} sq={5} />
            <Sq x={858} y={288} on /><Sq x={858} y={298} on /><Sq x={858} y={308} on={false} />
            <Sq x={930} y={298} on /><Sq x={1004} y={298} on />
            <Lbl x={937} y={302} fontSize="9.500" textAnchor="middle">9</Lbl>
            <Probe x={1013} y={297} v={1} />
            <GateTexts x={864} y={300} name="U2:A" type="4075" pinX={852} />

            {/* U3 */}
            <Gw d="M290 443H369V473M294 483H399M304 533H369V493" />
            <Pw d="M269 443H290M274 483H294M284 533H304M369 473H399M369 483H399M369 493H399M456 483H470M504 483H514" />
            <Gw d="M470 483H504" />
            <path d={orPath(389, 483, 59)} fill={BODY} stroke={RED} strokeWidth="1.700" />
            <circle cx="452" cy="483" r="3.200" fill={BODY} stroke={RED} strokeWidth="1.500" />
            <Source x={243} y={433} v={0} sq={6} />
            <Source x={248} y={473} v={0} sq={4} />
            <Source x={258} y={523} v={0} sq={4} />
            <Sq x={382} y={468} on={false} /><Sq x={382} y={478} on={false} /><Sq x={382} y={488} on={false} />
            <Sq x={456} y={478} on /><Sq x={504} y={478} on />
            <Lbl x={462} y={482} fontSize="9.500" textAnchor="middle">9</Lbl>
            <Probe x={513} y={477} v={1} />
            <GateTexts x={389} y={480} name="U3:A" type="4025" pinX={376} />

            {/* cursor */}
            <circle cx="624.500" cy="543.500" r="3.500" fill="none" stroke="#1a2fc0" />
            <path d="M624.500 538v11M619 543.500h11" stroke="#1a2fc0" />
          </Sheet>
        </CanvasFrame>
      </Main>

      <StatusBar>
        <StatusCell $w={258}>
          <Gripper />
          <StatusBtn $w={46} $pl={12}>
            <svg width="10" height="16"><path d="M1 0l8 8-8 8z" fill="#0a9a2a" /></svg>
          </StatusBtn>
          <StatusBtn $w={38}>
            <svg width="13" height="16"><rect x="0" y="0" width="3" height="16" fill="#1060d0" /><path d="M5 0l8 8-8 8z" fill="#1060d0" /></svg>
          </StatusBtn>
          <StatusBtn $w={34}>
            <svg width="9" height="16"><rect width="3" height="16" fill="#1060d0" /><rect x="6" width="3" height="16" fill="#1060d0" /></svg>
          </StatusBtn>
          <StatusBtn $w={39}>
            <svg width="14" height="14"><rect width="14" height="14" fill="#1060d0" stroke="#0a4aa8" /></svg>
          </StatusBtn>
          <StatusBtn $w={4}>
            <svg width="2" height="20"><rect width="1" height="20" fill="#9aa9b6" /><rect x="1" width="1" height="20" fill="#f3f8fb" /></svg>
          </StatusBtn>
          <StatusBtn $w={30}>
            <svg width="14" height="14"><circle cx="7" cy="7" r="6.500" fill="#128a2a" stroke="#0a4a16" /><rect x="6" y="6" width="2.500" height="5" fill="#fff" /><rect x="6" y="2.500" width="2.500" height="2" fill="#fff" /></svg>
          </StatusBtn>
          <Msg>2 Message(s)</Msg>
        </StatusCell>
        <StatusCell $w={120} $pl={16}>
          <Gripper />
          <SelectBox>
            Base Design
            <svg width="9" height="7"><path d="M1 1l3.500 4L8 1" fill="none" stroke="#444" strokeWidth="1.500" /></svg>
          </SelectBox>
        </StatusCell>
        <StatusCell $w={415} $pl={15}>
          <Gripper />
          <Anim>ANIMATING: 00:00:07.750000 (CPU load 0%)</Anim>
        </StatusCell>
        <StatusCell $w={807} $last>
          <Gripper />
          <Coord $w={396}>-3650.0</Coord>
          <Coord $w={383}>+900.0</Coord>
          <Units>th</Units>
        </StatusCell>
      </StatusBar>

      <Taskbar>
        <TaskSlot $w={48}>
          <svg width="28" height="26" viewBox="0 0 28 26">
            <path d="M1 4l11-1.600V12H1zM13 2.200L27 0v12H13zM1 13h11v9.600L1 21zM13 13h14v13l-14-2.200z" fill="#fff" />
          </svg>
        </TaskSlot>
        <TaskSlot $w={56}>
          <svg width="36" height="36" viewBox="0 0 36 36">
            <ellipse cx="19" cy="18" rx="17" ry="7" fill="none" stroke="#e8b820" strokeWidth="2" transform="rotate(-45 19 18)" />
            <circle cx="19" cy="19" r="11" fill="none" stroke="#2aa4ec" strokeWidth="5" strokeDasharray="52 12" transform="rotate(25 19 19)" />
            <path d="M10 18h18" stroke="#2aa4ec" strokeWidth="4" />
          </svg>
        </TaskSlot>
        <TaskSlot $w={58} $state="open">
          <svg width="36" height="36" viewBox="0 0 36 36">
            <path d="M3 7h12l3 3h15v20H3z" fill="#e8c868" stroke="#b8984a" />
            <rect x="7" y="5" width="9" height="4" fill="#eee" /><rect x="9" y="6" width="3" height="2" fill="#c83c2c" /><rect x="13" y="6" width="3" height="2" fill="#3ca83c" />
            <path d="M2 13h32l-2 18H4z" fill="#f6e4a4" />
            <path d="M10 30v-7h16v7M7 23h22" fill="none" stroke="#58b4e8" strokeWidth="3" />
          </svg>
        </TaskSlot>
        <TaskSlot $w={62}>
          <svg width="30" height="36" viewBox="0 0 30 36">
            <rect width="30" height="36" fill="#0a8a0a" />
            <path d="M6 11h18v18H6z" fill="#fff" />
            <path d="M10 11V7h10v4" fill="none" stroke="#fff" strokeWidth="2" />
            <path d="M11 16h3.500v3.500H11zM15.500 16H19v3.500h-3.500zM11 20.500h3.500V24H11zM15.500 20.500H19V24h-3.500z" fill="#0a8a0a" />
          </svg>
        </TaskSlot>
        <TaskSlot $w={53}>
          <svg width="30" height="30" viewBox="0 0 30 30">
            <circle cx="15" cy="15" r="14.500" fill="#3ba54a" />
            <path d="M15 10h13.500A14.500 14.500 0 0 1 14 29.500L21 18z" fill="#f4c520" />
            <path d="M15 .5A14.500 14.500 0 0 1 28.500 10L15 10 8 21 2.500 8A14.500 14.500 0 0 1 15 .5z" fill="#dc4437" />
            <circle cx="15" cy="15" r="6.500" fill="#4a8ce8" stroke="#e8eef4" strokeWidth="2.200" />
          </svg>
        </TaskSlot>
        <TaskSlot $w={61}>
          <svg width="32" height="34" viewBox="0 0 32 34">
            <circle cx="16" cy="16" r="14" fill="#2a5ea8" />
            <circle cx="14" cy="12" r="6" fill="#4a88c8" />
            <path d="M24 3C32 9 33 22 25 29C17 35 6 32 2 23C1 18 2 12 6 7C5 11 6 14 8 15C10 23 20 26 25 19C28 14 27 8 24 3z" fill="#ee7f1a" />
            <path d="M6 7C9 3 13 2 17 3C13 4 10 8 10 11C8 12 7 10 6 7z" fill="#e9501c" />
            <path d="M5 22C10 29 20 29 26 22C22 32 9 31 5 22z" fill="#f6b03c" />
          </svg>
        </TaskSlot>
        <TaskSlot $w={52} $state="active">
          <svg width="34" height="34" viewBox="0 0 34 34">
            <ellipse cx="17" cy="17" rx="16" ry="5" fill="none" stroke="#d8d0a0" transform="rotate(40 17 17)" />
            <ellipse cx="17" cy="17" rx="16" ry="5" fill="none" stroke="#d8d0a0" transform="rotate(-40 17 17)" />
            <circle cx="17" cy="17" r="7" fill="#4a5868" />
            <path d="M11 14a7 7 0 0 1 8-4l-2 6z" fill="#d8e4f0" />
          </svg>
        </TaskSlot>
        <Sliver />
        <Tray>
          <TrayIcon $w={10}><svg width="9" height="5"><path d="M0 5l4.500-5L9 5z" fill="#fff" /></svg></TrayIcon>
          <TrayIcon $w={38}>
            <svg width="18" height="18"><path d="M1.500 1v16" stroke="#fff" /><path d="M3 2h7l1 1h3v6H3z" fill="#e8edf6" /><circle cx="12" cy="13" r="4.500" fill="#d8242c" /><path d="M10 11l4 4M14 11l-4 4" stroke="#fff" /></svg>
          </TrayIcon>
          <TrayIcon $w={12}>
            <svg width="18" height="18"><circle cx="4" cy="3" r="2" fill="none" stroke="#fff" /><path d="M4 5v11" stroke="#fff" /><path d="M7 2h9v10" fill="none" stroke="#fff" /><circle cx="12" cy="13" r="4.500" fill="#d8242c" /><path d="M10 11l4 4M14 11l-4 4" stroke="#fff" /></svg>
          </TrayIcon>
          <TrayIcon $w={34}>
            <svg width="16" height="16"><path d="M1 5h3l4-4v14l-4-4H1z" fill="#e8edf6" /><path d="M10 5q2 3 0 6M12 3q3 5 0 10" fill="none" stroke="#e8edf6" /></svg>
          </TrayIcon>
          <TrayText $w={36} $ml={-1}>ENG<br />INTL</TrayText>
          <TrayText $w={50} $ml={11}>12:08 PM<br />8/2/2017</TrayText>
        </Tray>
      </Taskbar>
    </Page>
  );
}
